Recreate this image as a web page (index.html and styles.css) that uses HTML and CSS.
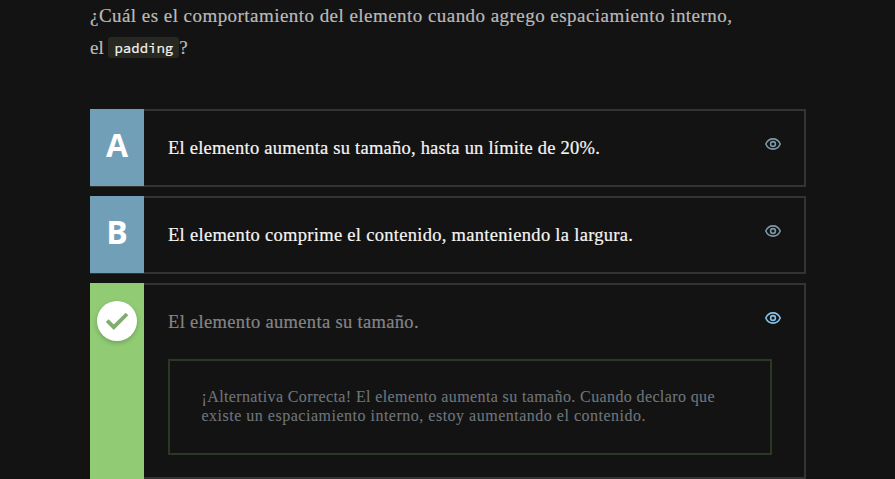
FILE: index.html
```html
<!DOCTYPE html>
<html lang="es">
<head>
<meta charset="utf-8">
<title>Padding</title>
<link rel="stylesheet" href="styles.css">
</head>
<body>
<svg class="defs" aria-hidden="true">
  <symbol id="eye" viewBox="0 0 16 12">
    <path d="M.8 6C2.2 2.7 4.9.9 8 .9S13.800 2.700 15.200 6C13.800 9.300 11.100 11.100 8 11.100S2.200 9.300.8 6Z"/>
    <circle cx="8" cy="6" r="2.400"/>
  </symbol>
</svg>
<main class="exercise">
  <p class="question"><span class="question-line">¿Cuál es el comportamiento del elemento cuando agrego espaciamiento interno,</span><br>el <code>padding</code>?</p>
  <ul class="options">
    <li class="option">
      <div class="letter">A</div>
      <div class="body">
        <p class="text text-a">El elemento aumenta su tamaño, hasta un límite de 20%.</p>
      </div>
      <svg class="eye"><use href="#eye"/></svg>
    </li>
    <li class="option">
      <div class="letter">B</div>
      <div class="body">
        <p class="text text-b">El elemento comprime el contenido, manteniendo la largura.</p>
      </div>
      <svg class="eye"><use href="#eye"/></svg>
    </li>
    <li class="option correct">
      <div class="letter"><span class="check"><svg viewBox="0 0 24 18"><path d="M2.200 8.600 8.800 15.200 22 2"/></svg></span></div>
      <div class="body">
        <p class="text text-c">El elemento aumenta su tamaño.</p>
        <p class="opinion"><span class="first">¡Alternativa Correcta! El elemento aumenta su tamaño. Cuando declaro que</span><br><span class="second">existe un espaciamiento interno, estoy aumentando el contenido.</span></p>
      </div>
      <svg class="eye"><use href="#eye"/></svg>
    </li>
  </ul>
</main>
</body>
</html>
```
FILE: styles.css
```css
* { box-sizing: border-box; }
html { overflow: hidden; }
body {
  margin: 0;
  height: 479px;
  overflow: hidden;
  background: #131313;
  color: #bababa;
  font-family: "Source Serif Pro", "Liberation Serif", serif;
}
.defs { position: absolute; width: 0; height: 0; }
.exercise { width: 716px; margin-left: 90px; }
.question {
  margin: 0;
  height: 109px;
  font-size: 19px;
  line-height: 32px;
  letter-spacing: 0;
  white-space: nowrap;
  -webkit-text-stroke: .2px;
}
.question-line { letter-spacing: .455px; }
code {
  display: inline-block;
  height: 21px;
  padding: 0 6px;
  border-radius: 3px;
  background: #272822;
  color: #f8f8f2;
  font: 14px/22px "Source Code Pro", "DejaVu Sans Mono", monospace;
  letter-spacing: 0;
  vertical-align: 1px;
}
.options {
  display: flex;
  flex-direction: column;
  gap: 9px;
  margin: 0;
  padding: 0;
  list-style: none;
}
.option {
  display: flex;
  height: 78px;
  border: 2px solid #333;
  border-left: 0;
}
.letter {
  width: 54px;
  height: 77px;
  margin-top: -2px;
  background: #729fb8;
  color: #fff;
  font: bold 32px/72px "Open Sans", sans-serif;
  text-align: center;
}
.body { width: 604px; margin-left: 24px; }
.text {
  margin: 0;
  padding-top: 21px;
  font-size: 18.500px;
  line-height: 32px;
  color: #f5f5f5;
  white-space: nowrap;
  -webkit-text-stroke: .2px;
}
.text-a { letter-spacing: .228px; }
.text-b { letter-spacing: .295px; }
.text-c { letter-spacing: .33px; }
.eye {
  width: 16px;
  height: 12px;
  margin: 27px 0 0 -7px;
  fill: none;
  stroke: #7b98a8;
  stroke-width: 1.600;
}
.correct { height: 196px; }
.correct .letter { height: 196px; padding-top: 18px; background: #91cc75; }
.correct .text { color: #858585; }
.correct .eye { stroke: #87c3e8; }
.check {
  display: flex;
  align-items: center;
  justify-content: center;
  width: 40px;
  height: 40px;
  margin: 0 auto;
  border-radius: 50%;
  background: #fff;
  box-shadow: 0 2px 5px rgba(0, 0, 0, .22);
}
.check svg {
  width: 24px;
  height: 18px;
  fill: none;
  stroke: #80ad6c;
  stroke-width: 3.800;
}
.opinion {
  height: 96px;
  margin: 21px 0 0;
  padding: 26px 31.500px;
  border: 2px solid #2b3824;
  color: #6f767c;
  font-size: 16px;
  line-height: 19px;
  white-space: nowrap;
  -webkit-text-stroke: .1px;
}
.first { letter-spacing: .38px; }
.second { letter-spacing: .505px; }
```
